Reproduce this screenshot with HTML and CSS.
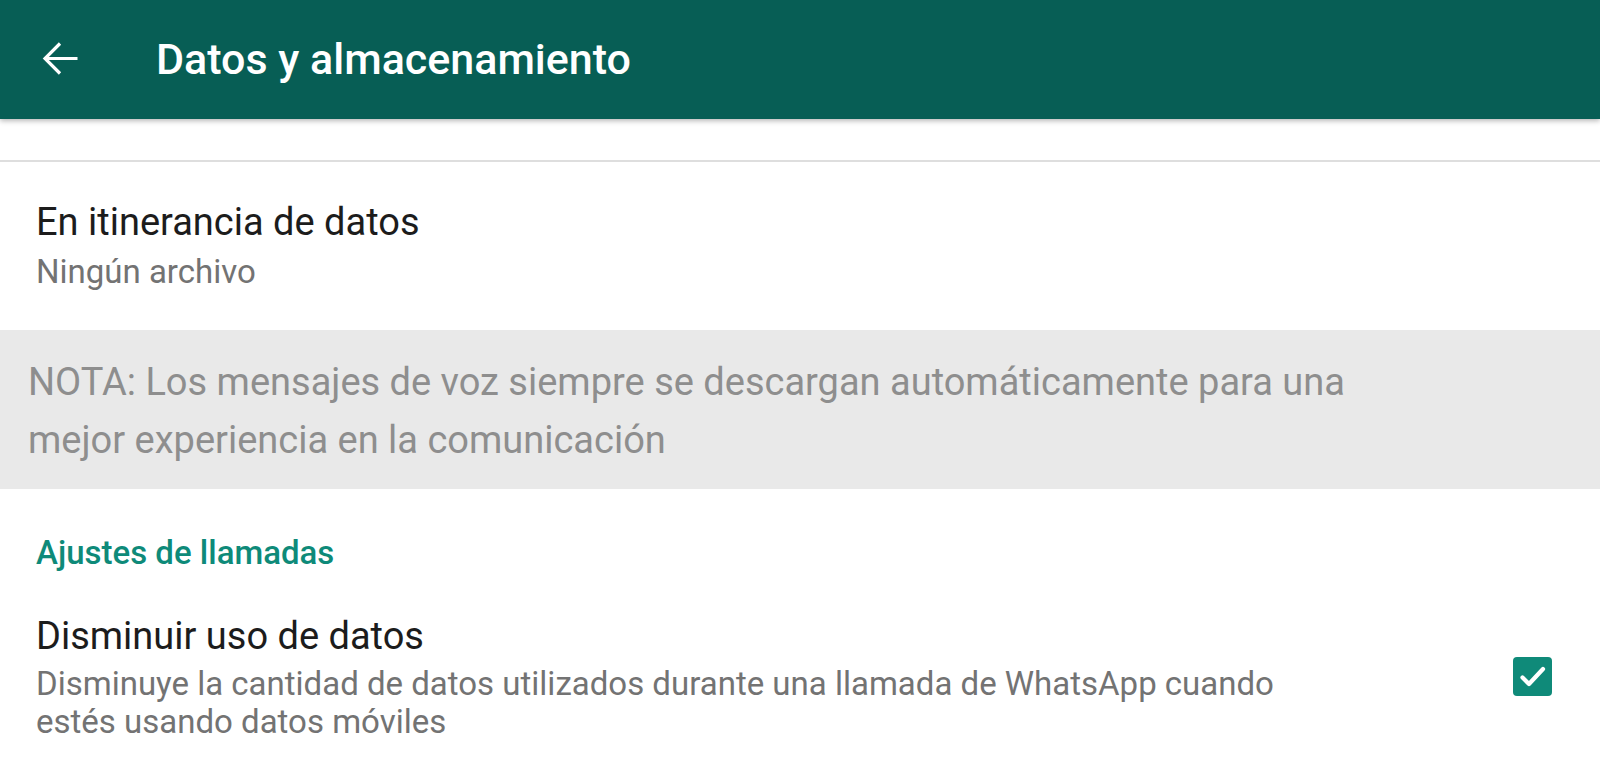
FILE: index.html
```html
<!DOCTYPE html>
<html lang="es">
<head>
<meta charset="utf-8">
<title>Datos y almacenamiento</title>
<link rel="stylesheet" href="styles.css">
</head>
<body>
  <header class="appbar">
    <button class="back" aria-label="Atrás">
      <svg width="37" height="35" viewBox="0 0 37 35" aria-hidden="true">
        <path d="M35.5 17.5H3M18 2.5L3 17.5L18 32.5" fill="none" stroke="#ffffff" stroke-width="3.2" stroke-linecap="butt" stroke-linejoin="miter"/>
      </svg>
    </button>
    <h1 class="appbar-title">Datos y almacenamiento</h1>
  </header>

  <main class="settings">
    <div class="section-end"></div>

    <div class="pref">
      <div class="pref-text">
        <div class="pref-title">En itinerancia de datos</div>
        <div class="pref-summary">Ningún archivo</div>
      </div>
    </div>

    <div class="note">
      <p class="note-text">NOTA: Los mensajes de voz siempre se descargan automáticamente para una mejor experiencia en la comunicación</p>
    </div>

    <h2 class="category">Ajustes de llamadas</h2>

    <div class="pref pref-check">
      <div class="pref-text">
        <div class="pref-title">Disminuir uso de datos</div>
        <div class="pref-summary pref-summary-wide">Disminuye la cantidad de datos utilizados durante una llamada de WhatsApp cuando estés usando datos móviles</div>
      </div>
      <span class="checkbox" role="checkbox" aria-checked="true">
        <svg width="39" height="39" viewBox="0 0 39 39" aria-hidden="true">
          <path d="M9.5 20.5L16 27L30 12" fill="none" stroke="#ffffff" stroke-width="4.2" stroke-linecap="round" stroke-linejoin="round"/>
        </svg>
      </span>
    </div>
  </main>
</body>
</html>
```

FILE: styles.css
```css
* {
  box-sizing: border-box;
}

html, body {
  margin: 0;
  padding: 0;
  background: #ffffff;
}

body {
  font-family: Roboto, "Noto Sans", "Liberation Sans", sans-serif;
  color: #212121;
  overflow: hidden;
}

/* top app bar */
.appbar {
  position: relative;
  z-index: 2;
  height: 119px;
  background: #075e55;
  display: flex;
  align-items: center;
  box-shadow: 0 2px 5px rgba(0, 0, 0, 0.28);
}

.back {
  margin: 0 0 2px 42px;
  padding: 0;
  border: 0;
  background: none;
  width: 37px;
  height: 35px;
  display: flex;
}

.appbar-title {
  margin: 0 0 1px 77px;
  font-size: 43px;
  font-weight: 500;
  color: #ffffff;
  line-height: 50px;
}

/* settings list */
.settings {
  display: flex;
  flex-direction: column;
}

.section-end {
  height: 43px;
  border-bottom: 2px solid #dedede;
}

.pref {
  padding: 38px 36px 38px 36px;
  display: flex;
}

.pref-text {
  flex: 1;
  min-width: 0;
}

.pref-title {
  font-size: 38px;
  line-height: 44px;
  color: #1c1c1c;
}

.pref-summary {
  margin-top: 8px;
  font-size: 33px;
  line-height: 40px;
  color: #737373;
}

.note {
  background: #e9e9e9;
  padding: 23px 28px 20px 28px;
}

.note-text {
  margin: 0;
  max-width: 1360px;
  font-size: 38px;
  line-height: 58px;
  color: #8e8e8e;
}

.category {
  margin: 0;
  padding: 44px 36px 0 36px;
  font-size: 33px;
  line-height: 40px;
  font-weight: 500;
  color: #0e8a79;
}

.pref-check {
  padding: 41px 48px 30px 36px;
}

.pref-check .pref-summary {
  margin-top: 7px;
  line-height: 38px;
}

.pref-summary-wide {
  max-width: 1260px;
}

.checkbox {
  flex: none;
  align-self: flex-start;
  width: 39px;
  height: 39px;
  border-radius: 4px;
  background: #0f8a79;
  display: flex;
  margin: 43px 0 0 40px;
}
```
